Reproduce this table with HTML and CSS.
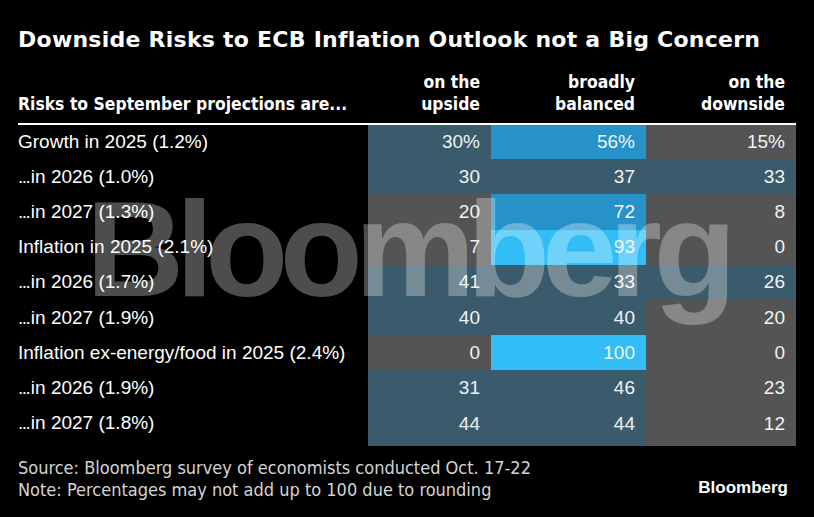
FILE: index.html
```html
<!DOCTYPE html>
<html lang="en">
<head>
<meta charset="utf-8">
<title>Downside Risks to ECB Inflation Outlook not a Big Concern</title>
<link rel="stylesheet" href="styles.css">
</head>
<body>
<div class="page">
  <h1 class="title">Downside Risks to ECB Inflation Outlook not a Big Concern</h1>
  <div class="chart">
    <div class="head">
      <div class="head-label">Risks to September projections are...</div>
      <div class="head-col">on the<br>upside</div>
      <div class="head-col">broadly<br>balanced</div>
      <div class="head-col">on the<br>downside</div>
    </div>
    <div class="body">
      <div class="row first">
        <div class="label">Growth in 2025 (1.2%)</div>
        <div class="cell t">30%</div><div class="cell b">56%</div><div class="cell g">15%</div>
      </div>
      <div class="row">
        <div class="label"><span class="dots">...</span>in 2026 (1.0%)</div>
        <div class="cell t">30</div><div class="cell t">37</div><div class="cell t">33</div>
      </div>
      <div class="row">
        <div class="label"><span class="dots">...</span>in 2027 (1.3%)</div>
        <div class="cell g">20</div><div class="cell b">72</div><div class="cell g">8</div>
      </div>
      <div class="row">
        <div class="label">Inflation in 2025 (2.1%)</div>
        <div class="cell g">7</div><div class="cell lb">93</div><div class="cell g">0</div>
      </div>
      <div class="row">
        <div class="label"><span class="dots">...</span>in 2026 (1.7%)</div>
        <div class="cell t">41</div><div class="cell t">33</div><div class="cell t">26</div>
      </div>
      <div class="row">
        <div class="label"><span class="dots">...</span>in 2027 (1.9%)</div>
        <div class="cell t">40</div><div class="cell t">40</div><div class="cell g">20</div>
      </div>
      <div class="row">
        <div class="label">Inflation ex-energy/food in 2025 (2.4%)</div>
        <div class="cell g">0</div><div class="cell lb">100</div><div class="cell g">0</div>
      </div>
      <div class="row">
        <div class="label"><span class="dots">...</span>in 2026 (1.9%)</div>
        <div class="cell t">31</div><div class="cell t">46</div><div class="cell g">23</div>
      </div>
      <div class="row last">
        <div class="label"><span class="dots">...</span>in 2027 (1.8%)</div>
        <div class="cell t">44</div><div class="cell t">44</div><div class="cell g">12</div>
      </div>
      <div class="watermark">Bloomberg</div>
    </div>
  </div>
  <div class="footer">
    <div class="notes">
      <div>Source: Bloomberg survey of economists conducted Oct. 17-22</div>
      <div>Note: Percentages may not add up to 100 due to rounding</div>
    </div>
    <div class="logo">Bloomberg</div>
  </div>
</div>
</body>
</html>
```
FILE: styles.css
```css
html, body {
  margin: 0;
  padding: 0;
  background: #000;
}
body {
  width: 814px;
  height: 517px;
  overflow: hidden;
  color: #fff;
  font-family: "Liberation Sans", Arial, sans-serif;
}
.page {
  padding: 27px 18px 0 18px;
}
.title {
  margin: 0;
  font-family: "DejaVu Sans", sans-serif;
  font-weight: bold;
  font-size: 22px;
  letter-spacing: 0.25px;
  line-height: 26px;
  color: #fff;
  white-space: nowrap;
}
.chart {
  margin-top: 18px;
}
.head {
  display: grid;
  grid-template-columns: 350px 123px 155px 150px;
  align-items: end;
  font-family: "DejaVu Sans", sans-serif;
  font-stretch: condensed;
  font-weight: bold;
  font-size: 17.4px;
  line-height: 22px;
  padding-bottom: 8px;
  border-bottom: 2px solid #fff;
}
.head-col {
  text-align: right;
  padding-right: 11px;
}
.body {
  position: relative;
}
.row {
  display: grid;
  grid-template-columns: 350px 123px 155px 150px;
  height: 35.2px;
  font-size: 19px;
}
.row.first {
  height: 34.2px;
}
.row.last {
  height: 40.2px;
}
.label, .cell {
  display: flex;
  align-items: center;
  height: 35.2px;
}
.row.first .label, .row.first .cell {
  height: 34.2px;
}
.label {
  color: #fff;
  white-space: nowrap;
}
.dots {
  letter-spacing: -1.5px;
  margin-right: 1.5px;
}
.cell {
  justify-content: flex-end;
  padding-right: 11px;
  color: #f2f2f2;
}
.row.last .cell {
  height: 40.2px;
  align-items: flex-start;
  line-height: 35.2px;
}
.t { background: #3a5b6b; }
.g { background: #545454; }
.b { background: #2792c7; }
.lb { background: #33bdf6; }
.watermark {
  position: absolute;
  left: 68px;
  top: 56px;
  font-family: "Liberation Sans", Arial, sans-serif;
  font-weight: bold;
  font-size: 136px;
  line-height: 1;
  letter-spacing: -8.4px;
  color: rgba(255, 255, 255, 0.3);
  pointer-events: none;
  white-space: nowrap;
}
.footer {
  display: flex;
  justify-content: space-between;
  align-items: flex-end;
  margin-top: 11px;
}
.notes {
  font-family: "DejaVu Sans", sans-serif;
  font-stretch: condensed;
  font-size: 18px;
  line-height: 22px;
  color: #d4d4d4;
}
.logo {
  font-family: "Liberation Sans", Arial, sans-serif;
  font-weight: bold;
  font-size: 17px;
  line-height: 22px;
  margin-right: 8px;
  padding-bottom: 2px;
}
```
